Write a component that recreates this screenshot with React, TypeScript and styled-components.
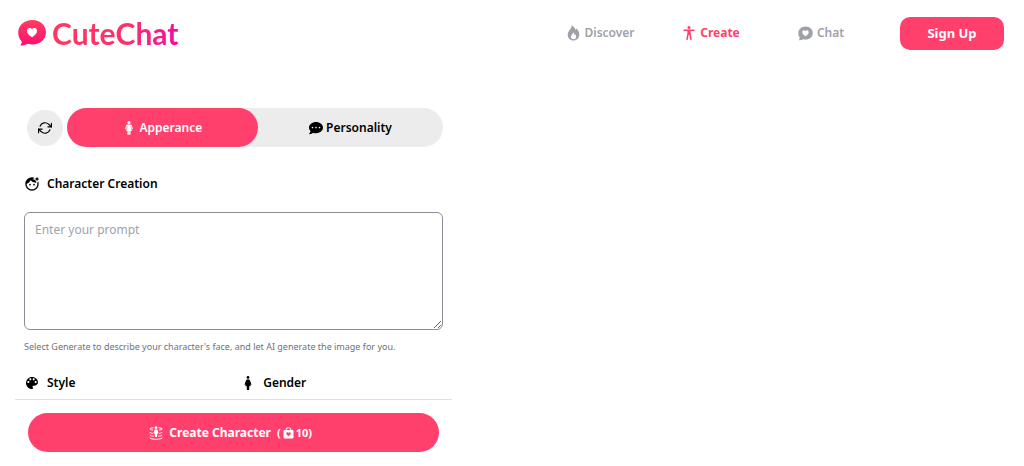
import React from "react";
import styled, { createGlobalStyle } from "styled-components";
import { IoBody, IoWoman } from "react-icons/io5";
import { FaCommentDots } from "react-icons/fa";
import { FiRefreshCw } from "react-icons/fi";
import { MdFaceRetouchingNatural } from "react-icons/md";
import { IoMdColorPalette } from "react-icons/io";

const pink = "#ff406c";

const GlobalStyle = createGlobalStyle`
  *, *::before, *::after { box-sizing: border-box; }
  body {
    margin: 0;
    background: #fff;
    color: #000;
    font-family: "Noto Sans", "Open Sans", sans-serif;
    font-size: 12px;
    line-height: 20px;
  }
  button, textarea { font: inherit; }
  svg { display: block; flex: none; }
`;

const Header = styled.header`
  display: flex;
  align-items: center;
  justify-content: space-between;
  height: 66px;
  padding: 0 20px 0 18px;
`;

const Logo = styled.a`
  display: flex;
  align-items: center;
  gap: 6px;
  text-decoration: none;
`;

const LogoText = styled.span`
  font-family: Lato, sans-serif;
  font-size: 30px;
  font-weight: 700;
  line-height: 40px;
  color: transparent;
  background: linear-gradient(100deg, #ff3860 0%, #ff2f6a 60%, #fb1296 90%, #ff00a8 100%);
  background-clip: text;
  -webkit-background-clip: text;
`;

const HeaderRight = styled.div`
  display: flex;
  align-items: center;
  gap: 24px;
`;

const Nav = styled.nav`
  display: grid;
  grid-template-columns: repeat(3, 110px);
`;

const NavLink = styled.a<{ $active?: boolean }>`
  display: flex;
  align-items: center;
  justify-content: center;
  gap: 4px;
  color: ${(p) => (p.$active ? pink : "#9fa1a9")};
  font-weight: ${(p) => (p.$active ? 700 : 600)};
  text-decoration: none;
`;

const SignUp = styled.button`
  width: 104px;
  height: 33px;
  border: 0;
  border-radius: 10px;
  background: ${pink};
  color: #fff;
  font-size: 13px;
  font-weight: 700;
`;

const Main = styled.main`
  padding: 42px 15px 0;
`;

const Panel = styled.form`
  width: 44%;
`;

const PanelBody = styled.div`
  padding: 0 9px 6px;
`;

const TopRow = styled.div`
  display: flex;
  align-items: center;
  gap: 4px;
  padding-left: 3px;
`;

const RoundButton = styled.button`
  display: flex;
  align-items: center;
  justify-content: center;
  width: 36px;
  height: 36px;
  flex: none;
  padding: 0;
  border: 0;
  border-radius: 50%;
  background: #ececec;
  color: #000;
`;

const Tabs = styled.div`
  display: grid;
  grid-template-columns: 190fr 185fr;
  flex: 1;
  height: 39px;
  border-radius: 20px;
  background: #ececec;
`;

const Tab = styled.button<{ $active?: boolean }>`
  display: flex;
  align-items: center;
  justify-content: center;
  gap: 3px;
  padding: 0;
  border: 0;
  border-radius: 20px;
  background: ${(p) => (p.$active ? pink : "transparent")};
  color: ${(p) => (p.$active ? "#fff" : "#000")};
  font-weight: 600;
`;

const FieldLabel = styled.label`
  display: flex;
  align-items: center;
  gap: 7px;
  margin: 27px 0 18px;
  font-weight: 600;
`;

const Prompt = styled.textarea`
  display: block;
  width: 100%;
  height: 118px;
  padding: 7px 10px;
  border: 1px solid #8e8c9c;
  border-radius: 6px;
  background: #fff;
  outline: 0;
  &::placeholder { color: #9ca3af; }
`;

const Hint = styled.p`
  margin: 9px 0 18px;
  font-size: 9px;
  line-height: 16px;
  color: #6b7280;
`;

const Options = styled.div`
  display: grid;
  grid-template-columns: 1fr 1fr;
  gap: 13px;
`;

const OptionTitle = styled.h2`
  display: flex;
  align-items: center;
  gap: 7px;
  margin: 0;
  font-size: 12px;
  font-weight: 600;
`;

const IconSlot = styled.span`
  display: flex;
  justify-content: center;
  width: 16px;
`;

const PanelFooter = styled.footer`
  padding: 13px;
  border-top: 1px solid #dfe1e6;
`;

const CreateButton = styled.button`
  display: flex;
  align-items: center;
  justify-content: center;
  gap: 6px;
  width: 100%;
  height: 39px;
  padding: 0 6px 0 0;
  border: 0;
  border-radius: 20px;
  background: ${pink};
  color: #fff;
  font-weight: 700;
`;

const Cost = styled.span`
  display: flex;
  align-items: center;
  gap: 2px;
  font-size: 11px;
`;

const LogoMark = () => (
  <svg width="28" height="28" viewBox="0 0 28 28" aria-hidden="true">
    <defs>
      <linearGradient id="mark" x1="0" y1="0" x2="0" y2="1">
        <stop offset="0" stopColor="#ff3d60" />
        <stop offset="1" stopColor="#ff0f70" />
      </linearGradient>
    </defs>
    <path
      fill="url(#mark)"
      d="M14.500 1C22 1 28 6.200 28 13.300S22 25.500 14.500 25.500c-1.600 0-3.200-.2-4.600-.7-2.300 1.100-4.900 1.900-7.600 1.800 1-1.400 1.500-2.900 1.300-4.400C1.300 19.900.2 16.800.2 13.400.2 6.200 6.500 1 14.500 1z"
    />
    <path
      fill="#fff"
      d="M14 18.300C10.800 16 9 14.400 9 12c0-1.700 1.200-2.900 2.600-2.900 1 0 1.900.5 2.400 1.400.5-.9 1.400-1.400 2.400-1.400 1.500 0 2.600 1.200 2.600 2.900 0 2.400-1.800 4-5 6.300z"
    />
  </svg>
);

const FlameIcon = () => (
  <svg width="13" height="16" viewBox="0 0 13 16" fill="currentColor" fillRule="evenodd" aria-hidden="true">
    <path d="M4.600.3c2 1.100 3.400 2.700 4.100 4.800.4-.5.700-1 .8-1.500 1.700 1.700 2.800 3.900 2.800 6 0 3.500-2.500 6-5.800 6S.7 13.200.7 9.800c0-2.200 1-3.600 2.100-5C3.800 3.600 4.600 2.300 4.600.3zM6.400 7.200c-.2 1.600-2.500 2.500-2.500 4.600 0 1.500 1.100 2.500 2.600 2.500s2.700-1 2.700-2.600c0-1-.5-1.900-1.100-2.600-.1.500-.3.900-.7 1.100-.1-1.100-.4-2.200-1-3z" />
  </svg>
);

const ChatHeartIcon = () => (
  <svg width="15" height="15" viewBox="0 0 15 15" fill="currentColor" fillRule="evenodd" aria-hidden="true">
    <path d="M7.700.4c4 0 7.100 2.800 7.100 6.600s-3.100 6.600-7.100 6.600c-.9 0-1.700-.1-2.500-.4-1.300.8-2.800 1.200-4.300 1 .7-.9 1-1.800.8-2.600C.8 10.400.3 8.800.3 7 .3 3.200 3.600.4 7.700.4zM7.500 10.300c2.100-1.500 3.200-2.600 3.200-4.100 0-1.100-.8-1.900-1.700-1.900-.6 0-1.200.3-1.500.9-.3-.6-.9-.9-1.500-.9-1 0-1.700.8-1.700 1.900 0 1.500 1.100 2.600 3.200 4.100z" />
  </svg>
);

const WomanIcon = () => (
  <svg width="8" height="14" viewBox="0 0 8 14" fill="currentColor" aria-hidden="true">
    <circle cx="4" cy="1.500" r="1.400" />
    <path d="M3.100 3.500h1.800c.5 0 .8.300 1 .8L7.400 8.200c.2.800-.8 1.100-1.100.4L6.100 8l.6 2.300H5.200V14H2.800v-3.700H1.300L1.900 8l-.2.600c-.3.700-1.300.4-1.100-.4l1.500-3.900c.2-.5.500-.8 1-.8z" />
  </svg>
);

const HologramIcon = () => (
  <svg width="14" height="14" viewBox="0 0 14 14" fill="none" stroke="currentColor" aria-hidden="true">
    <circle cx="7" cy="1.700" r="1.400" fill="currentColor" stroke="none" />
    <path d="M5.500 3.400h3l1 4H8.300L8 11H6l-.3-3.600H4.500z" fill="currentColor" stroke="none" />
    <path d="M4.500 1.700C2.500 1.900.8 2.300.8 2.900c0 .5 1.300.9 3.200 1.100M9.500 1.700c2 .2 3.700.6 3.700 1.200 0 .5-1.300.9-3.200 1.100" />
    <path d="M.7 6.200c.3.600 1.500 1 3.200 1.200M13.300 6.200c-.3.600-1.500 1-3.200 1.200" />
    <path d="M.7 9c.3.600 1.700 1.100 4 1.200M13.300 9c-.3.600-1.700 1.100-4 1.200" />
    <path d="M.7 11.600c.2 1 2.900 1.700 6.300 1.700s6.100-.7 6.300-1.700" />
  </svg>
);

const HeartBagIcon = () => (
  <svg width="11" height="12" viewBox="0 0 11 12" aria-hidden="true">
    <path d="M3 4V3a2.500 2.300 0 0 1 5 0v1" fill="none" stroke="currentColor" />
    <rect x="0.500" y="3" width="10" height="8.500" rx="1" fill="currentColor" />
    <path d="M5.500 9.300C4 8.200 3.300 7.500 3.300 6.500c0-1.300 1.600-1.600 2.200-.5.600-1.100 2.200-.8 2.200.5 0 1-.7 1.700-2.200 2.800z" fill={pink} />
  </svg>
);

export default function App() {
  return (
    <>
      <GlobalStyle />
      <Header>
        <Logo href="#home">
          <LogoMark />
          <LogoText>CuteChat</LogoText>
        </Logo>
        <HeaderRight>
          <Nav>
            <NavLink href="#discover"><FlameIcon />Discover</NavLink>
            <NavLink href="#create" $active><IoBody size={14} />Create</NavLink>
            <NavLink href="#chat"><ChatHeartIcon />Chat</NavLink>
          </Nav>
          <SignUp type="button">Sign Up</SignUp>
        </HeaderRight>
      </Header>
      <Main>
        <Panel>
          <PanelBody>
            <TopRow>
              <RoundButton type="button" aria-label="Reset"><FiRefreshCw size={14} /></RoundButton>
              <Tabs>
                <Tab type="button" $active><IoWoman size={14} />Apperance</Tab>
                <Tab type="button"><FaCommentDots size={14} />Personality</Tab>
              </Tabs>
            </TopRow>
            <FieldLabel htmlFor="prompt">
              <IconSlot><MdFaceRetouchingNatural size={16} /></IconSlot>
              Character Creation
            </FieldLabel>
            <Prompt id="prompt" placeholder="Enter your prompt" />
            <Hint>Select Generate to describe your character's face, and let AI generate the image for you.</Hint>
            <Options>
              <OptionTitle><IconSlot><IoMdColorPalette size={16} /></IconSlot>Style</OptionTitle>
              <OptionTitle><IconSlot><WomanIcon /></IconSlot>Gender</OptionTitle>
            </Options>
          </PanelBody>
          <PanelFooter>
            <CreateButton type="button">
              <HologramIcon />
              Create Character
              <Cost>(<HeartBagIcon />10)</Cost>
            </CreateButton>
          </PanelFooter>
        </Panel>
      </Main>
    </>
  );
}
